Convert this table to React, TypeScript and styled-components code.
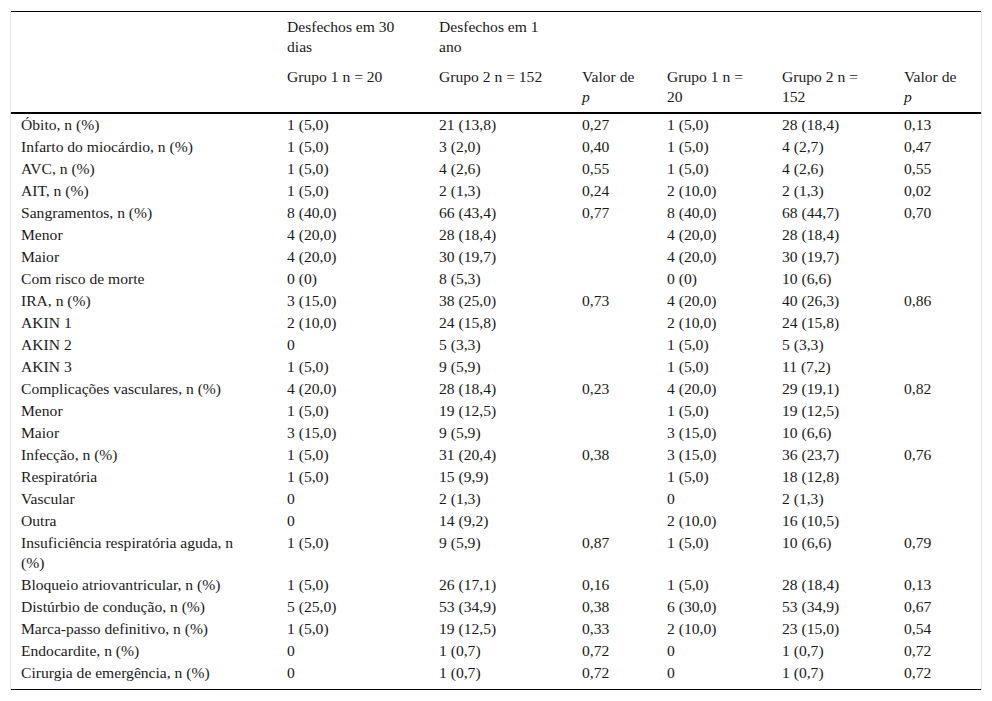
import React from "react";
import styled, { createGlobalStyle } from "styled-components";

const GlobalStyle = createGlobalStyle`
	html, body {
		margin: 0;
		padding: 0;
		background: #ffffff;
	}
	body {
		font-family: "Liberation Serif", "Times New Roman", serif;
		color: #1a1a1a;
	}
`;

type Row = {
	label: React.ReactNode;
	cells: string[];
	last?: boolean;
};

const rows: Row[] = [
	{ label: "Óbito, n (%)", cells: ["1 (5,0)", "21 (13,8)", "0,27", "1 (5,0)", "28 (18,4)", "0,13"] },
	{ label: "Infarto do miocárdio, n (%)", cells: ["1 (5,0)", "3 (2,0)", "0,40", "1 (5,0)", "4 (2,7)", "0,47"] },
	{ label: "AVC, n (%)", cells: ["1 (5,0)", "4 (2,6)", "0,55", "1 (5,0)", "4 (2,6)", "0,55"] },
	{ label: "AIT, n (%)", cells: ["1 (5,0)", "2 (1,3)", "0,24", "2 (10,0)", "2 (1,3)", "0,02"] },
	{ label: "Sangramentos, n (%)", cells: ["8 (40,0)", "66 (43,4)", "0,77", "8 (40,0)", "68 (44,7)", "0,70"] },
	{ label: "Menor", cells: ["4 (20,0)", "28 (18,4)", "", "4 (20,0)", "28 (18,4)", ""] },
	{ label: "Maior", cells: ["4 (20,0)", "30 (19,7)", "", "4 (20,0)", "30 (19,7)", ""] },
	{ label: "Com risco de morte", cells: ["0 (0)", "8 (5,3)", "", "0 (0)", "10 (6,6)", ""] },
	{ label: "IRA, n (%)", cells: ["3 (15,0)", "38 (25,0)", "0,73", "4 (20,0)", "40 (26,3)", "0,86"] },
	{ label: "AKIN 1", cells: ["2 (10,0)", "24 (15,8)", "", "2 (10,0)", "24 (15,8)", ""] },
	{ label: "AKIN 2", cells: ["0", "5 (3,3)", "", "1 (5,0)", "5 (3,3)", ""] },
	{ label: "AKIN 3", cells: ["1 (5,0)", "9 (5,9)", "", "1 (5,0)", "11 (7,2)", ""] },
	{ label: "Complicações vasculares, n (%)", cells: ["4 (20,0)", "28 (18,4)", "0,23", "4 (20,0)", "29 (19,1)", "0,82"] },
	{ label: "Menor", cells: ["1 (5,0)", "19 (12,5)", "", "1 (5,0)", "19 (12,5)", ""] },
	{ label: "Maior", cells: ["3 (15,0)", "9 (5,9)", "", "3 (15,0)", "10 (6,6)", ""] },
	{ label: "Infecção, n (%)", cells: ["1 (5,0)", "31 (20,4)", "0,38", "3 (15,0)", "36 (23,7)", "0,76"] },
	{ label: "Respiratória", cells: ["1 (5,0)", "15 (9,9)", "", "1 (5,0)", "18 (12,8)", ""] },
	{ label: "Vascular", cells: ["0", "2 (1,3)", "", "0", "2 (1,3)", ""] },
	{ label: "Outra", cells: ["0", "14 (9,2)", "", "2 (10,0)", "16 (10,5)", ""] },
	{
		label: (
			<>
				Insuficiência respiratória aguda, n
				<br />
				(%)
			</>
		),
		cells: ["1 (5,0)", "9 (5,9)", "0,87", "1 (5,0)", "10 (6,6)", "0,79"],
	},
	{ label: "Bloqueio atriovantricular, n (%)", cells: ["1 (5,0)", "26 (17,1)", "0,16", "1 (5,0)", "28 (18,4)", "0,13"] },
	{ label: "Distúrbio de condução, n (%)", cells: ["5 (25,0)", "53 (34,9)", "0,38", "6 (30,0)", "53 (34,9)", "0,67"] },
	{ label: "Marca-passo definitivo, n (%)", cells: ["1 (5,0)", "19 (12,5)", "0,33", "2 (10,0)", "23 (15,0)", "0,54"] },
	{ label: "Endocardite, n (%)", cells: ["0", "1 (0,7)", "0,72", "0", "1 (0,7)", "0,72"] },
	{ label: "Cirurgia de emergência, n (%)", cells: ["0", "1 (0,7)", "0,72", "0", "1 (0,7)", "0,72"], last: true },
];

const colWidths = [266, 152, 143, 85, 115, 122, 87];

export default function App() {
	return (
		<>
			<GlobalStyle />
			<Page>
				<Frame>
					<Table>
						<colgroup>
							{colWidths.map((w, i) => (
								<col key={i} style={{ width: w }} />
							))}
						</colgroup>
						<thead>
							<tr>
								<HeadCell />
								<HeadCell>
									Desfechos em 30
									<br />
									dias
								</HeadCell>
								<HeadCell>
									Desfechos em 1
									<br />
									ano
								</HeadCell>
								<HeadCell />
								<HeadCell />
								<HeadCell />
								<HeadCell />
							</tr>
							<tr>
								<HeadCell $rule />
								<HeadCell $rule>Grupo 1 n = 20</HeadCell>
								<HeadCell $rule>Grupo 2 n = 152</HeadCell>
								<HeadCell $rule>
									Valor de
									<br />
									<i>p</i>
								</HeadCell>
								<HeadCell $rule>
									Grupo 1 n =
									<br />
									20
								</HeadCell>
								<HeadCell $rule>
									Grupo 2 n =
									<br />
									152
								</HeadCell>
								<HeadCell $rule>
									Valor de
									<br />
									<i>p</i>
								</HeadCell>
							</tr>
						</thead>
						<tbody>
							{rows.map((row, i) => (
								<tr key={i}>
									<Cell $last={row.last}>{row.label}</Cell>
									{row.cells.map((c, j) => (
										<Cell key={j} $last={row.last}>
											{c}
										</Cell>
									))}
								</tr>
							))}
						</tbody>
					</Table>
				</Frame>
			</Page>
		</>
	);
}

const serif = `"Liberation Serif", "Times New Roman", serif`;

const Page = styled.div`
	padding: 10px;
	width: 992px;
	box-sizing: border-box;
`;

const Frame = styled.div`
	border-left: 1px solid #e4e4e4;
	border-right: 1px solid #e4e4e4;
	padding-top: 1px;
`;

const Table = styled.table`
	width: 970px;
	table-layout: fixed;
	border-collapse: collapse;
	border-top: 1px solid #000;
	border-bottom: 1px solid #000;
	font-family: ${serif};
	font-size: 15.6px;
	line-height: 20px;
	color: #1a1a1a;
`;

const HeadCell = styled.th<{ $rule?: boolean }>`
	font-family: ${serif};
	font-size: 15.6px;
	text-align: left;
	vertical-align: top;
	font-weight: normal;
	padding: 5px 10px;
	border-bottom: ${(p) => (p.$rule ? "2px solid #000" : "none")};
	white-space: nowrap;
`;

const Cell = styled.td<{ $last?: boolean }>`
	font-family: ${serif};
	font-size: 15.6px;
	text-align: left;
	vertical-align: top;
	padding: 1px 10px ${(p) => (p.$last ? "6px" : "1px")} 10px;
	white-space: nowrap;
`;
